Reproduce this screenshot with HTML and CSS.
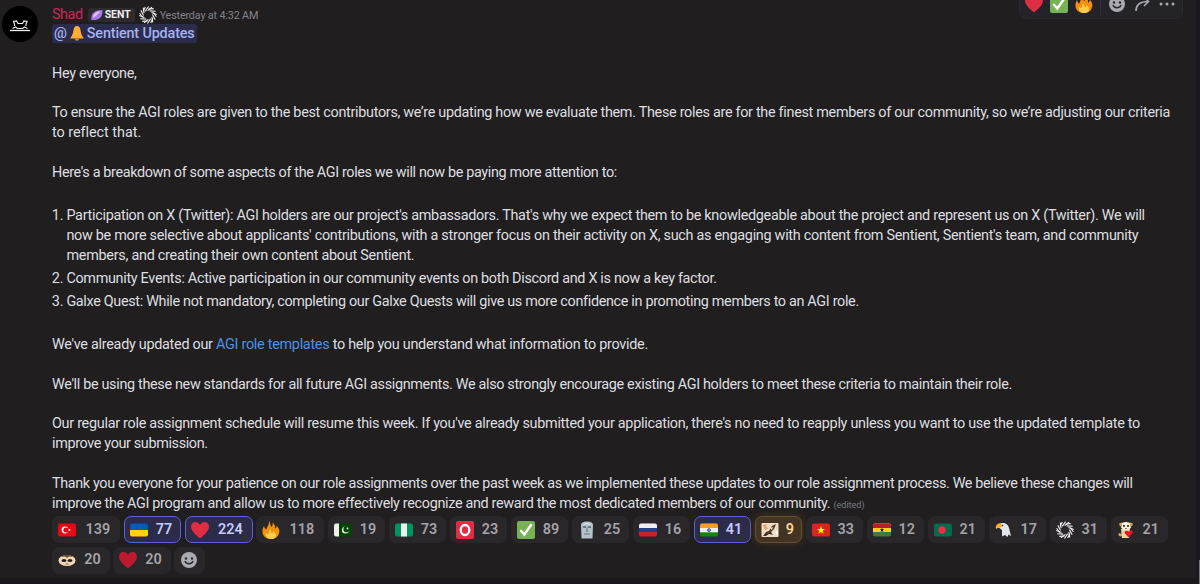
FILE: index.html
```
<!DOCTYPE html>
<html lang="en">
<head>
  <meta charset="UTF-8">
  <title>Sentient Updates</title>
  <link rel="stylesheet" href="styles.css">
</head>
<body>
  <!-- shared icons -->
  <svg class="sprite" aria-hidden="true">
    <symbol id="heart" viewBox="0 0 18 18"><path d="M9 17.500C4 13.500 0 9.500 0 5.600C0 2.800 2 1 4.500 1C6.400 1 8.100 2.100 9 3.800C9.900 2.100 11.600 1 13.500 1C16 1 18 2.800 18 5.600C18 9.500 14 13.500 9 17.500Z"/></symbol>
    <symbol id="check" viewBox="0 0 18 18"><rect width="18" height="18" rx="2" fill="#77b255"/><path d="M4 9.800L7.300 13.500L14 4" fill="none" stroke="#fff" stroke-width="2.400" stroke-linecap="round"/></symbol>
    <symbol id="fire" viewBox="0 0 18 18"><path d="M7 0C9 2 8 4 9 6C11 5 11 3 10.500 1.500C13 3 13 5 13 7.500C14.500 7 14.800 6 14.600 4.500C17 7 18 9.500 17 12.500C15.500 17 12 18 9 18C5 18 1.500 16 .7 12.500C0 9 1 7 2 5C2.500 7 3 8 4.500 8.500C5 5 7.500 4 7 0Z" fill="#f4900c"/><path d="M9 18C5 18 3 15 4 11.500C5 13 5.500 13.500 6.500 13C7.500 11 6.500 9.500 8.500 8C9 9.500 9 11.500 10 12.500C11 12 11 11 11.500 10C13 12 14.500 13 14 15C13 17.500 11 18 9 18Z" fill="#ffcc4d"/></symbol>
    <symbol id="smile" viewBox="0 0 18 18"><circle cx="9" cy="9" r="8" fill="#a9a9b0"/><circle cx="6" cy="7.500" r="1.200" fill="#29272b"/><circle cx="12" cy="7.500" r="1.200" fill="#29272b"/><path d="M5.200 10.500C6.500 13.500 11.500 13.500 12.800 10.500" fill="none" stroke="#29272b" stroke-width="1.500" stroke-linecap="round"/></symbol>
    <symbol id="swirl" viewBox="-10 -10 20 20">
      <g id="blade" fill="none" stroke="#f4f4f4" stroke-width="1.200"><path d="M-5.400 -3.800L-3 -9M-3 -4L.6 -9.500M-.4 -4.800L4.400 -8.600"/></g>
      <use href="#blade" transform="rotate(60)"/><use href="#blade" transform="rotate(120)"/><use href="#blade" transform="rotate(180)"/><use href="#blade" transform="rotate(240)"/><use href="#blade" transform="rotate(300)"/>
    </symbol>
  </svg>

  <div class="toolbar">
    <svg class="emoji red"><use href="#heart"/></svg>
    <svg class="emoji"><use href="#check"/></svg>
    <svg class="emoji"><use href="#fire"/></svg>
    <span class="divider"></span>
    <svg class="emoji"><use href="#smile"/></svg>
    <svg class="emoji tool" viewBox="0 0 18 18"><path d="M3 16C3 10 7 6.500 15 6.500M11 2L15.500 6.500L11 11"/></svg>
    <svg class="emoji dots" viewBox="0 0 18 18"><circle cx="3" cy="9" r="1.500"/><circle cx="9" cy="9" r="1.500"/><circle cx="15" cy="9" r="1.500"/></svg>
  </div>
  <div class="scrollbar"></div>

  <div class="message">
    <svg class="avatar" viewBox="0 0 36 36"><circle cx="18" cy="18" r="18" fill="#000"/><path d="M8 24.500H28" stroke="#eee" stroke-width="1.300"/><path d="M12.500 20V18L11.500 15.500L14.500 15L16 17.500H20.500L22 15L25 15.500L24 18V20M10.500 22.500L13.500 21L15.500 22.500H20.500L22.500 21L25.500 22.500" fill="none" stroke="#eee" stroke-width="1.200"/></svg>

    <div class="content">
      <div class="head">
        <span class="name">Shad</span>
        <span class="tag"><svg viewBox="0 0 12 12"><path d="M.5 11C-.5 5 3 1 11.500 1C12 8 8 11.500 .5 11Z" fill="#a678e8"/><path d="M2 9C2 5 5 2.500 9.500 2.500C7 5 5 7 2 9Z" fill="#dcc8fa"/></svg>SENT</span>
        <svg class="role"><use href="#swirl"/></svg>
        <span class="time">Yesterday at 4:32 AM</span>
      </div>
      <div class="mention-line"><span class="mention">@<svg class="bell" viewBox="0 0 14 15"><path d="M7 0C9 0 10 1.500 10.500 4C11 8 12 10 14 12.500H0C2 10 3 8 3.500 4C4 1.500 5 0 7 0Z" fill="#ffac33"/><path d="M5 12.500H9C9 15.500 5 15.500 5 12.500Z" fill="#e58a1b"/></svg>Sentient Updates</span></div>

      <p>Hey everyone,</p>
      <p><span class="first">To ensure the AGI roles are given to the best contributors, we’re updating how we evaluate them. These roles are for the finest members of our community, so we’re adjusting our criteria</span><br><span class="loose">to reflect that.</span></p>
      <p class="tight">Here's a breakdown of some aspects of the AGI roles we will now be paying more attention to:</p>
      <ol>
        <li><span class="wide-line">Participation on X (Twitter): AGI holders are our project's ambassadors. That's why we expect them to be knowledgeable about the project and represent us on X (Twitter). We will</span><br><span class="wider">now be more selective about applicants' contributions, with a stronger focus on their activity on X, such as engaging with content from Sentient, Sentient's team, and community</span><br><span class="widest">members, and creating their own content about Sentient.</span></li>
        <li>Community Events: Active participation in our community events on both Discord and X is now a key factor.</li>
        <li><span class="narrow">Galxe Quest: While not mandatory, completing our Galxe Quests will give us more confidence in promoting members to an AGI role.</span></li>
      </ol>
      <p class="wider">We've already updated our <a>AGI role templates</a> to help you understand what information to provide.</p>
      <p class="narrow">We'll be using these new standards for all future AGI assignments. We also strongly encourage existing AGI holders to meet these criteria to maintain their role.</p>
      <p class="wider">Our regular role assignment schedule will resume this week. If you've already submitted your application, there's no need to reapply unless you want to use the updated template to<br><span class="tight">improve your submission.</span></p>
      <p class="tight">Thank you everyone for your patience on our role assignments over the past week as we implemented these updates to our role assignment process. We believe these changes will<br><span class="narrow">improve the AGI program and allow us to more effectively recognize and reward the most dedicated members of our community.</span> <small>(edited)</small></p>

      <div class="reactions">
        <div class="chip wide"><svg class="emoji" viewBox="0 0 18 18"><rect y="2.500" width="18" height="13" rx="2" fill="#e30917"/><circle cx="7" cy="9" r="3.400" fill="#fff"/><circle cx="8" cy="9" r="2.600" fill="#e30917"/><circle cx="11.500" cy="9" r="1" fill="#fff"/></svg><b>139</b></div>
        <div class="chip mine"><svg class="emoji" viewBox="0 0 18 18"><path d="M0 9V4.500Q0 2.500 2 2.500H16Q18 2.500 18 4.500V9Z" fill="#005bbb"/><path d="M0 9V13.500Q0 15.500 2 15.500H16Q18 15.500 18 13.500V9Z" fill="#ffd500"/></svg><b>77</b></div>
        <div class="chip wide mine"><svg class="emoji red"><use href="#heart"/></svg><b>224</b></div>
        <div class="chip wide"><svg class="emoji"><use href="#fire"/></svg><b>118</b></div>
        <div class="chip"><svg class="emoji" viewBox="0 0 18 18"><rect y="2.500" width="18" height="13" rx="2" fill="#004600"/><path d="M5 2.500H2Q0 2.500 0 4.500V13.500Q0 15.500 2 15.500H5Z" fill="#eee"/><circle cx="11.500" cy="9" r="3.600" fill="#eee"/><circle cx="12.500" cy="8.200" r="3.100" fill="#004600"/><circle cx="13.500" cy="7.500" r=".9" fill="#eee"/></svg><b>19</b></div>
        <div class="chip"><svg class="emoji" viewBox="0 0 18 18"><rect width="18" height="13" y="2.500" rx="2" fill="#009460"/><path d="M6 2.500H12V15.500H6Z" fill="#eee"/></svg><b>73</b></div>
        <div class="chip"><svg class="emoji" viewBox="0 0 18 18"><rect width="18" height="18" rx="2" fill="#dd2e44"/><ellipse cx="9" cy="9" rx="4.300" ry="5" fill="none" stroke="#fff" stroke-width="2.300"/></svg><b>23</b></div>
        <div class="chip"><svg class="emoji"><use href="#check"/></svg><b>89</b></div>
        <div class="chip"><svg class="emoji" viewBox="0 0 18 18"><path d="M3 4Q3 .5 9 .5T15 4L14.500 17.500H3.500Z" fill="#b4c2cb"/><path d="M5 5.500Q6.500 4 8 5.500V7H5ZM10 5.500Q11.500 4 13 5.500V7H10Z" fill="#66757f"/><path d="M8.300 6H9.700L10.500 11H7.500Z" fill="#8899a6"/><path d="M6 12.500H12V13.500H6Z" fill="#66757f"/><path d="M5.500 3.500Q9 1.500 12.500 3.500" fill="none" stroke="#e1e8ed"/></svg><b>25</b></div>
        <div class="chip"><svg class="emoji" viewBox="0 0 18 18"><rect y="2.500" width="18" height="13" rx="2" fill="#ce2028"/><path d="M0 11V4.500Q0 2.500 2 2.500H16Q18 2.500 18 4.500V11Z" fill="#22408c"/><path d="M0 7V4.500Q0 2.500 2 2.500H16Q18 2.500 18 4.500V7Z" fill="#eee"/></svg><b>16</b></div>
        <div class="chip mine"><svg class="emoji" viewBox="0 0 18 18"><rect y="2.500" width="18" height="13" rx="2" fill="#138808"/><path d="M0 7V4.500Q0 2.500 2 2.500H16Q18 2.500 18 4.500V7Z" fill="#ff9933"/><path d="M0 7H18V11.300H0Z" fill="#eee"/><circle cx="9" cy="9.100" r="1.500" fill="#8b8bc8" stroke="#23237c" stroke-width=".6"/></svg><b>41</b></div>
        <div class="chip super"><svg class="emoji" viewBox="0 0 18 18"><rect x=".5" y="2" width="17" height="14" rx="1" fill="#f0dcc4"/><path d="M2 15L5 11L8 10L11 5L15 3L13 8L10 11L12 14L8 13L5 15Z" fill="#4a3428"/><path d="M2 4L6 3L5 6L8 7L4 9Z" fill="#e0a268"/><path d="M9 7L12 6L11 9Z" fill="#f7ead8"/><path d="M14 11L17 9V15Z" fill="#fff"/></svg><b>9</b></div>
        <div class="chip"><svg class="emoji" viewBox="0 0 18 18"><rect y="2.500" width="18" height="13" rx="2" fill="#da251d"/><path d="M9 5L10 8H13L10.700 9.800L11.500 12.700L9 11L6.500 12.700L7.300 9.800L5 8H8Z" fill="#ff0"/></svg><b>33</b></div>
        <div class="chip"><svg class="emoji" viewBox="0 0 18 18"><rect y="2.500" width="18" height="13" rx="2" fill="#3e7c3a"/><path d="M0 11V4.500Q0 2.500 2 2.500H16Q18 2.500 18 4.500V11Z" fill="#fcd116"/><path d="M0 7V4.500Q0 2.500 2 2.500H16Q18 2.500 18 4.500V7Z" fill="#b51f2e"/><path d="M9 6.800L9.600 8.300H11L9.900 9.300L10.300 11L9 10L7.700 11L8.100 9.300L7 8.300H8.400Z"/></svg><b>12</b></div>
        <div class="chip"><svg class="emoji" viewBox="0 0 18 18"><rect y="2.500" width="18" height="13" rx="2" fill="#006a4d"/><circle cx="8" cy="9" r="3.700" fill="#f42a41"/></svg><b>21</b></div>
        <div class="chip"><svg class="emoji" viewBox="0 0 18 18"><path d="M4 3C8 1 13 2 14 7L16 15L13.500 13.500L12.500 16L10 14L7 15.500V9L3 6Z" fill="#e1e8ed"/><path d="M6.500 3C3 1.500 0 4 1 8C3 6 5 7 7 6Z" fill="#ffac33"/><circle cx="7.500" cy="4.500" r=".8" fill="#292f33"/></svg><b>17</b></div>
        <div class="chip"><svg class="emoji"><use href="#swirl"/></svg><b>31</b></div>
        <div class="chip"><svg class="emoji" viewBox="0 0 18 18"><path d="M4 8H13L12 17H5Z" fill="#f1d3a2"/><path d="M2 12Q.5 14 3 15.500L5 15V13Z" fill="#d9a566"/><path d="M5 2Q9 0 13 2L14 7Q9 11 4 7Z" fill="#fff1d8"/><path d="M5 1.500L2 2.500L3 5.500L5 4.500ZM13 1.500L16 2.500L15 5.500L13 4.500Z" fill="#dba262"/><circle cx="7" cy="5" r=".9"/><circle cx="11" cy="5" r=".9"/><path d="M8 7H10L9 8Z"/><path d="M11.500 16.500L7.500 12Q8 8.500 11.500 10.500Q15 8 16 11.500Z" fill="#e5182b"/></svg><b>21</b></div>
        <div class="chip"><svg class="emoji" viewBox="0 0 18 18"><ellipse cx="9" cy="9.500" rx="8.500" ry="5.500" fill="#f2d8b0"/><path d="M3 6Q9 1.500 15 6L11 5.500L9 7L7 5.500Z" fill="#6b4a38"/><ellipse cx="6" cy="9.500" rx="2.500" ry="1.500" fill="#292020"/><ellipse cx="12" cy="9.500" rx="2.500" ry="1.500" fill="#292020"/><path d="M7.500 13H10.500" stroke="#865"/></svg><b>20</b></div>
        <div class="chip"><svg class="emoji crimson"><use href="#heart"/></svg><b>20</b></div>
        <div class="chip add"><svg class="emoji"><use href="#smile"/></svg></div>
      </div>
    </div>
  </div>
</body>
</html>
```
FILE: styles.css
```
body {
  margin: 0;
  height: 584px;
  overflow: hidden;
  box-sizing: border-box;
  border-bottom: 6px solid #1b191e;
  border-right: 4px solid #1b191e;
  background: #201e1f;
  color: #dedee0;
  font: 14.4px/19.8px Roboto, sans-serif;
  letter-spacing: -0.305px;
}
.sprite {
  position: absolute;
  width: 0;
  height: 0;
}
/* spacing tweaks for individual lines */
.first {
  letter-spacing: -0.299px;
}
.loose {
  letter-spacing: -0.03px;
}
.widest {
  letter-spacing: -0.255px;
}
.wider {
  letter-spacing: -0.28px;
}
.wide-line {
  letter-spacing: -0.292px;
}
.narrow {
  letter-spacing: -0.326px;
}
.tight {
  letter-spacing: -0.355px;
}
.emoji {
  width: 18px;
  height: 18px;
  flex: none;
}
.red {
  fill: #dd2e44;
}
.crimson {
  fill: #be1931;
}
.toolbar {
  position: absolute;
  top: -12px;
  left: 1019px;
  width: 164px;
  height: 31px;
  box-sizing: border-box;
  padding: 3px 5px 2px;
  display: flex;
  align-items: center;
  gap: 7px;
  border: 1px solid #2b2a2f;
  border-radius: 7px;
  background: #242327;
}
.divider {
  width: 1px;
  height: 22px;
  background: #303034;
}
.tool {
  fill: none;
  stroke: #a9a9b0;
  stroke-width: 1.6;
}
.dots {
  fill: #a9a9b0;
}
.scrollbar {
  position: absolute;
  right: 0;
  bottom: 0;
  width: 1px;
  height: 24px;
  background: #77767c;
}
.message {
  display: flex;
  padding: 5.2px 0 0 2px;
}
.avatar {
  width: 36px;
  height: 36px;
  margin-top: 1px;
  flex: none;
}
.content {
  margin-left: 14px;
  width: 1130px;
  white-space: nowrap;
}
.head {
  display: flex;
  align-items: center;
  height: 19px;
}
.name {
  color: #c62b58;
  letter-spacing: -0.45px;
}
.tag {
  display: flex;
  align-items: center;
  gap: 2px;
  box-sizing: border-box;
  width: 47px;
  height: 14px;
  margin-left: 5px;
  padding: 0 3px;
  border-radius: 3px;
  background: #2d2b2e;
  color: #eee;
  font-size: 10.5px;
  font-weight: 700;
  letter-spacing: 0;
}
.tag svg {
  width: 12px;
  height: 12px;
}
.role {
  width: 18px;
  height: 18px;
  margin: 0 3px 0 4px;
}
.time {
  margin-top: 2px;
  color: #85848b;
  font-size: 10.8px;
  letter-spacing: -0.17px;
}
.mention-line {
  height: 19.8px;
}
.mention {
  display: inline-block;
  height: 19px;
  padding: 0 2px;
  border-radius: 3px;
  background: #2b2c4c;
  color: #a5b1ee;
  font-weight: 500;
  letter-spacing: -0.15px;
}
.bell {
  width: 14px;
  height: 15px;
  margin: 0 3px;
  vertical-align: -3px;
}
p {
  margin: 19.8px 0 0;
}
ol {
  margin: 19.8px 0 0;
  padding: 3.6px 0 0 14.4px;
}
li {
  margin-bottom: 3.6px;
}
ol + p {
  margin-top: 23px;
}
a {
  color: #4c92e0;
}
small {
  color: #7c7b82;
  font-size: 9px;
  letter-spacing: 0;
}
.reactions {
  display: flex;
  flex-wrap: wrap;
  gap: 3.6px;
  margin-top: 1px;
  padding-left: 0.4px;
  letter-spacing: 0;
}
.chip {
  display: flex;
  align-items: center;
  box-sizing: border-box;
  width: 57.4px;
  height: 27px;
  padding-left: 5px;
  border: 1px solid #29272a;
  border-radius: 7px;
  background: #29272a;
  color: #a4a3a9;
}
.chip b {
  flex: 1;
  text-align: center;
  font-weight: 600;
}
.wide {
  width: 67.9px;
}
.mine {
  border-color: #5b61d8;
  background: #2c2b4a;
  color: #c2caff;
}
.super {
  width: 47.3px;
  border-color: #68502f;
  background: #433423;
  color: #f6d49b;
  box-shadow: 0 0 8px #4a3820;
}
.add {
  width: 30.6px;
}
```
